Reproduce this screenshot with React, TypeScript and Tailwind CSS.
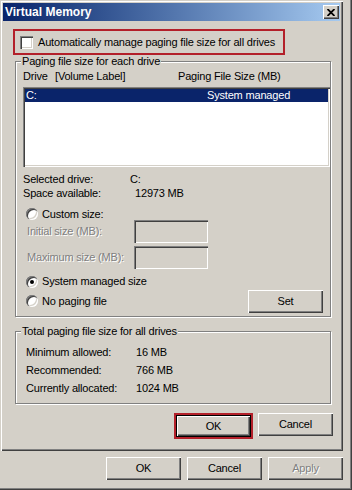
import React from 'react';

const raised = 'bg-[#d4d0c8] shadow-[inset_1px_1px_0_#ffffff,inset_-1px_-1px_0_#404040,inset_-2px_-2px_0_#808080]';
const sunken = 'shadow-[inset_1px_1px_0_#808080,inset_2px_2px_0_#404040,inset_-1px_-1px_0_#ffffff,inset_-2px_-2px_0_#d4d0c8]';
const etched = 'border border-[#808080] shadow-[inset_1px_1px_0_#ffffff,1px_1px_0_#ffffff]';
const disabledText = 'text-[#808080] [text-shadow:1px_1px_0_#ffffff]';

function Button({ label, disabled, className = '' }: { label: string; disabled?: boolean; className?: string }) {
  return (
    <div className={`w-[75px] h-[23px] flex items-center justify-center ${raised} ${disabled ? disabledText : ''} ${className}`}>
      {label}
    </div>
  );
}

function Radio({ checked }: { checked?: boolean }) {
  return (
    <span className={`w-[12px] h-[12px] rounded-full bg-white flex items-center justify-center shrink-0 ${sunken}`}>
      {checked && <span className="w-[4px] h-[4px] rounded-full bg-black" />}
    </span>
  );
}

function Legend({ text }: { text: string }) {
  return <span className="-mt-[7px] ml-[5px] px-[1px] self-start bg-[#d4d0c8] leading-[13px]">{text}</span>;
}

function SizeRow({ label, mt }: { label: string; mt: string }) {
  return (
    <div className={`flex items-center h-[23px] pl-[11px] ${mt}`}>
      <span className={`w-[107px] ${disabledText}`}>{label}</span>
      <span className={`w-[74px] h-[23px] bg-[#d4d0c8] ${sunken}`} />
    </div>
  );
}

const totals = [
  ['Minimum allowed:', '16 MB'],
  ['Recommended:', '766 MB'],
  ['Currently allocated:', '1024 MB'],
];

export default function App() {
  return (
    <div className="w-[352px] h-[490px] bg-[#d4d0c8] overflow-hidden whitespace-nowrap font-['Liberation_Sans',Arial,sans-serif] text-[11px] tracking-[-0.18px] text-black leading-[13px] shadow-[inset_-1px_-1px_0_#404040,inset_-2px_-2px_0_#808080]">
      {/* Virtual Memory window */}
      <div className="w-[343px] h-[451px] p-[3px] flex flex-col shadow-[inset_1px_1px_0_#d4d0c8,inset_2px_2px_0_#ffffff,inset_-1px_-1px_0_#404040,inset_-2px_-2px_0_#808080]">
        <div className="h-[18px] flex items-center pl-[2px] pr-[1px] bg-linear-to-r from-[#0a246a] to-[#a6caf0]">
          <span className="text-white font-bold text-[12px] tracking-normal">Virtual Memory</span>
          <div className={`ml-auto w-[16px] h-[14px] flex items-center justify-center ${raised}`}>
            <svg width="8" height="7" viewBox="0 0 8 7">
              <path d="M0.5 0 L7.5 7 M7.5 0 L0.5 7" stroke="#000" strokeWidth="1.8" />
            </svg>
          </div>
        </div>

        <div className="mt-[8px] ml-[10px] w-[272px] h-[26px] border-2 border-[#b3202a] flex items-center pl-[5px]">
          <span className={`w-[13px] h-[13px] bg-white shrink-0 ${sunken}`} />
          <span className="ml-[5px]">Automatically manage paging file size for all drives</span>
        </div>

        {/* Paging file size for each drive */}
        <div className={`mt-[6px] ml-[12px] w-[316px] flex flex-col pb-[4px] ${etched}`}>
          <Legend text="Paging file size for each drive" />
          <div className="mt-[2px] pl-[7px] flex">
            <span className="w-[32px]">Drive</span>
            <span className="w-[123px]">[Volume Label]</span>
            <span>Paging File Size (MB)</span>
          </div>
          <div className={`mt-[4px] ml-[7px] w-[307px] h-[80px] bg-white p-[2px] ${sunken}`}>
            <div className="h-[13px] flex bg-[#0a246a] text-white">
              <span className="w-[182px] pl-[1px]">C:</span>
              <span>System managed</span>
            </div>
          </div>
          <div className="mt-[5px] pl-[7px] leading-[14px]">
            <div className="flex">
              <span className="w-[107px]">Selected drive:</span>
              <span>C:</span>
            </div>
            <div className="flex">
              <span className="w-[112px]">Space available:</span>
              <span>12973 MB</span>
            </div>
          </div>
          <div className="mt-[8px] h-[12px] pl-[10px] flex items-center">
            <Radio />
            <span className="ml-[4px] leading-[12px]">Custom size:</span>
          </div>
          <SizeRow label="Initial size (MB):" mt="" />
          <SizeRow label="Maximum size (MB):" mt="mt-[3px]" />
          <div className="mt-[6px] h-[13px] pl-[10px] flex items-center">
            <Radio checked />
            <span className="ml-[4px]">System managed size</span>
          </div>
          <div className="mt-[2px] h-[22px] pl-[10px] pr-[7px] flex items-center">
            <Radio />
            <span className="ml-[4px]">No paging file</span>
            <Button label="Set" className="ml-auto h-[22px]" />
          </div>
        </div>

        {/* Total paging file size for all drives */}
        <div className={`mt-[14px] ml-[12px] w-[316px] flex flex-col pb-[6px] ${etched}`}>
          <Legend text="Total paging file size for all drives" />
          <div className="mt-[5px] pl-[10px]">
            {totals.map(([k, v]) => (
              <div key={k} className="h-[18px] flex items-center">
                <span className="w-[110px]">{k}</span>
                <span>{v}</span>
              </div>
            ))}
          </div>
        </div>

        <div className="mt-[9px] pr-[7px] flex justify-end items-start gap-[5px]">
          <div className="w-[79px] h-[26px] border-2 border-[#b3202a]">
            <div className="w-full h-full border border-black">
              <div className={`w-full h-full flex items-center justify-center ${raised}`}>OK</div>
            </div>
          </div>
          <Button label="Cancel" />
        </div>
      </div>

      {/* parent dialog buttons */}
      <div className="mt-[6px] pr-[9px] flex justify-end gap-[6px]">
        <Button label="OK" />
        <Button label="Cancel" />
        <Button label="Apply" disabled />
      </div>
    </div>
  );
}
